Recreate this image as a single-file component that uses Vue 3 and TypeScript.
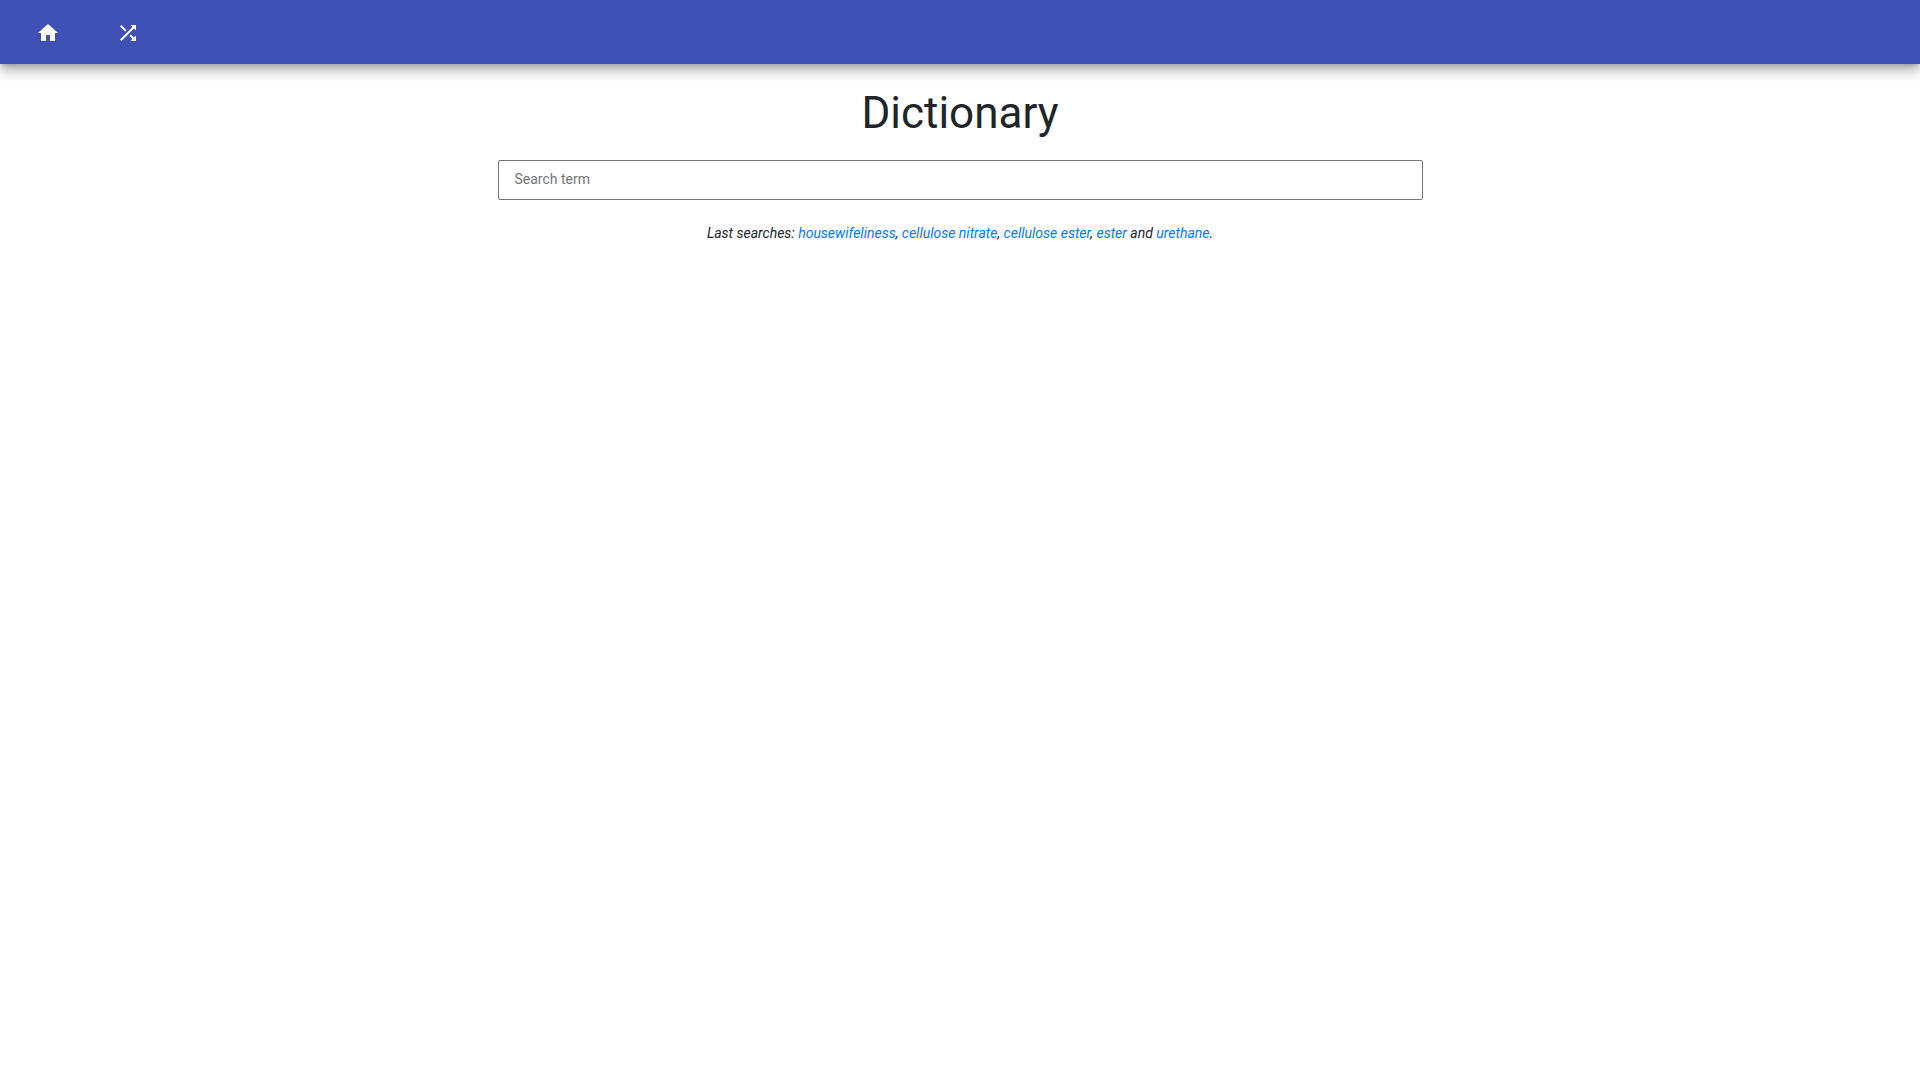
<script setup lang="ts">
import { ref } from 'vue'

const term = ref('')
const recent: string[] = ['housewifeliness', 'cellulose nitrate', 'cellulose ester', 'ester', 'urethane']

function separator(index: number): string {
  if (index === recent.length - 1) return '.'
  return index === recent.length - 2 ? ' and ' : ', '
}
</script>

<template>
  <header class="toolbar">
    <nav class="nav">
      <a class="nav-link" href="#home" aria-label="Home">
        <svg viewBox="0 0 24 24" aria-hidden="true"><path d="M10 20v-6h4v6h5v-8h3L12 3 2 12h3v8z" /></svg>
      </a>
      <a class="nav-link" href="#random" aria-label="Random word">
        <svg viewBox="0 0 24 24" aria-hidden="true">
          <path d="M10.59 9.17L5.41 4 4 5.41l5.17 5.17 1.42-1.41zM14.5 4l2.04 2.04L4 18.59 5.41 20 17.96 7.46 20 9.5V4h-5.5zm.33 9.41l-1.41 1.41 3.13 3.13L14.5 20H20v-5.5l-2.04 2.04-3.13-3.13z" />
        </svg>
      </a>
    </nav>
  </header>
  <main class="content">
    <h1 class="title">Dictionary</h1>
    <input v-model="term" class="search" type="text" placeholder="Search term" aria-label="Search term" />
    <p class="recent">
      Last searches:
      <template v-for="(word, i) in recent" :key="word"><a :href="'#' + encodeURIComponent(word)">{{ word }}</a>{{ separator(i) }}</template>
    </p>
  </main>
</template>

<style>
body {
  margin: 0;
  background: #fff;
}
</style>

<style scoped>
.toolbar {
  position: relative;
  height: 64px;
  background: #3f51b5;
  box-shadow: 0 5px 5px -3px rgba(0, 0, 0, 0.2), 0 8px 10px 1px rgba(0, 0, 0, 0.14), 0 3px 14px 2px rgba(0, 0, 0, 0.12);
}
.nav {
  box-sizing: border-box;
  display: flex;
  height: 100%;
  padding: 2px 16px 0;
}
.nav-link {
  display: flex;
  align-items: center;
  justify-content: center;
  width: 64px;
  margin-right: 16px;
  color: #fff;
}
.nav-link svg {
  width: 24px;
  height: 24px;
  fill: currentColor;
}
.content {
  box-sizing: border-box;
  max-width: 957px;
  margin: 0 auto;
  padding: 21px 16px;
  font-family: Roboto, "Liberation Sans", sans-serif;
  font-size: 14px;
  line-height: 20px;
  color: #212529;
  text-align: center;
}
.title {
  margin: 0 0 19px;
  font-size: 44px;
  font-weight: 400;
  line-height: 56px;
}
.search {
  box-sizing: border-box;
  display: block;
  width: 100%;
  height: 40px;
  padding: 0 16px 2px;
  border: 1px solid #767676;
  border-radius: 2px;
  font: inherit;
  color: inherit;
}
.search::placeholder {
  color: #757575;
}
.recent {
  margin: 23px 0 0;
  font-style: oblique 10deg;
}
.recent a {
  color: #007bff;
  text-decoration: none;
}
</style>
